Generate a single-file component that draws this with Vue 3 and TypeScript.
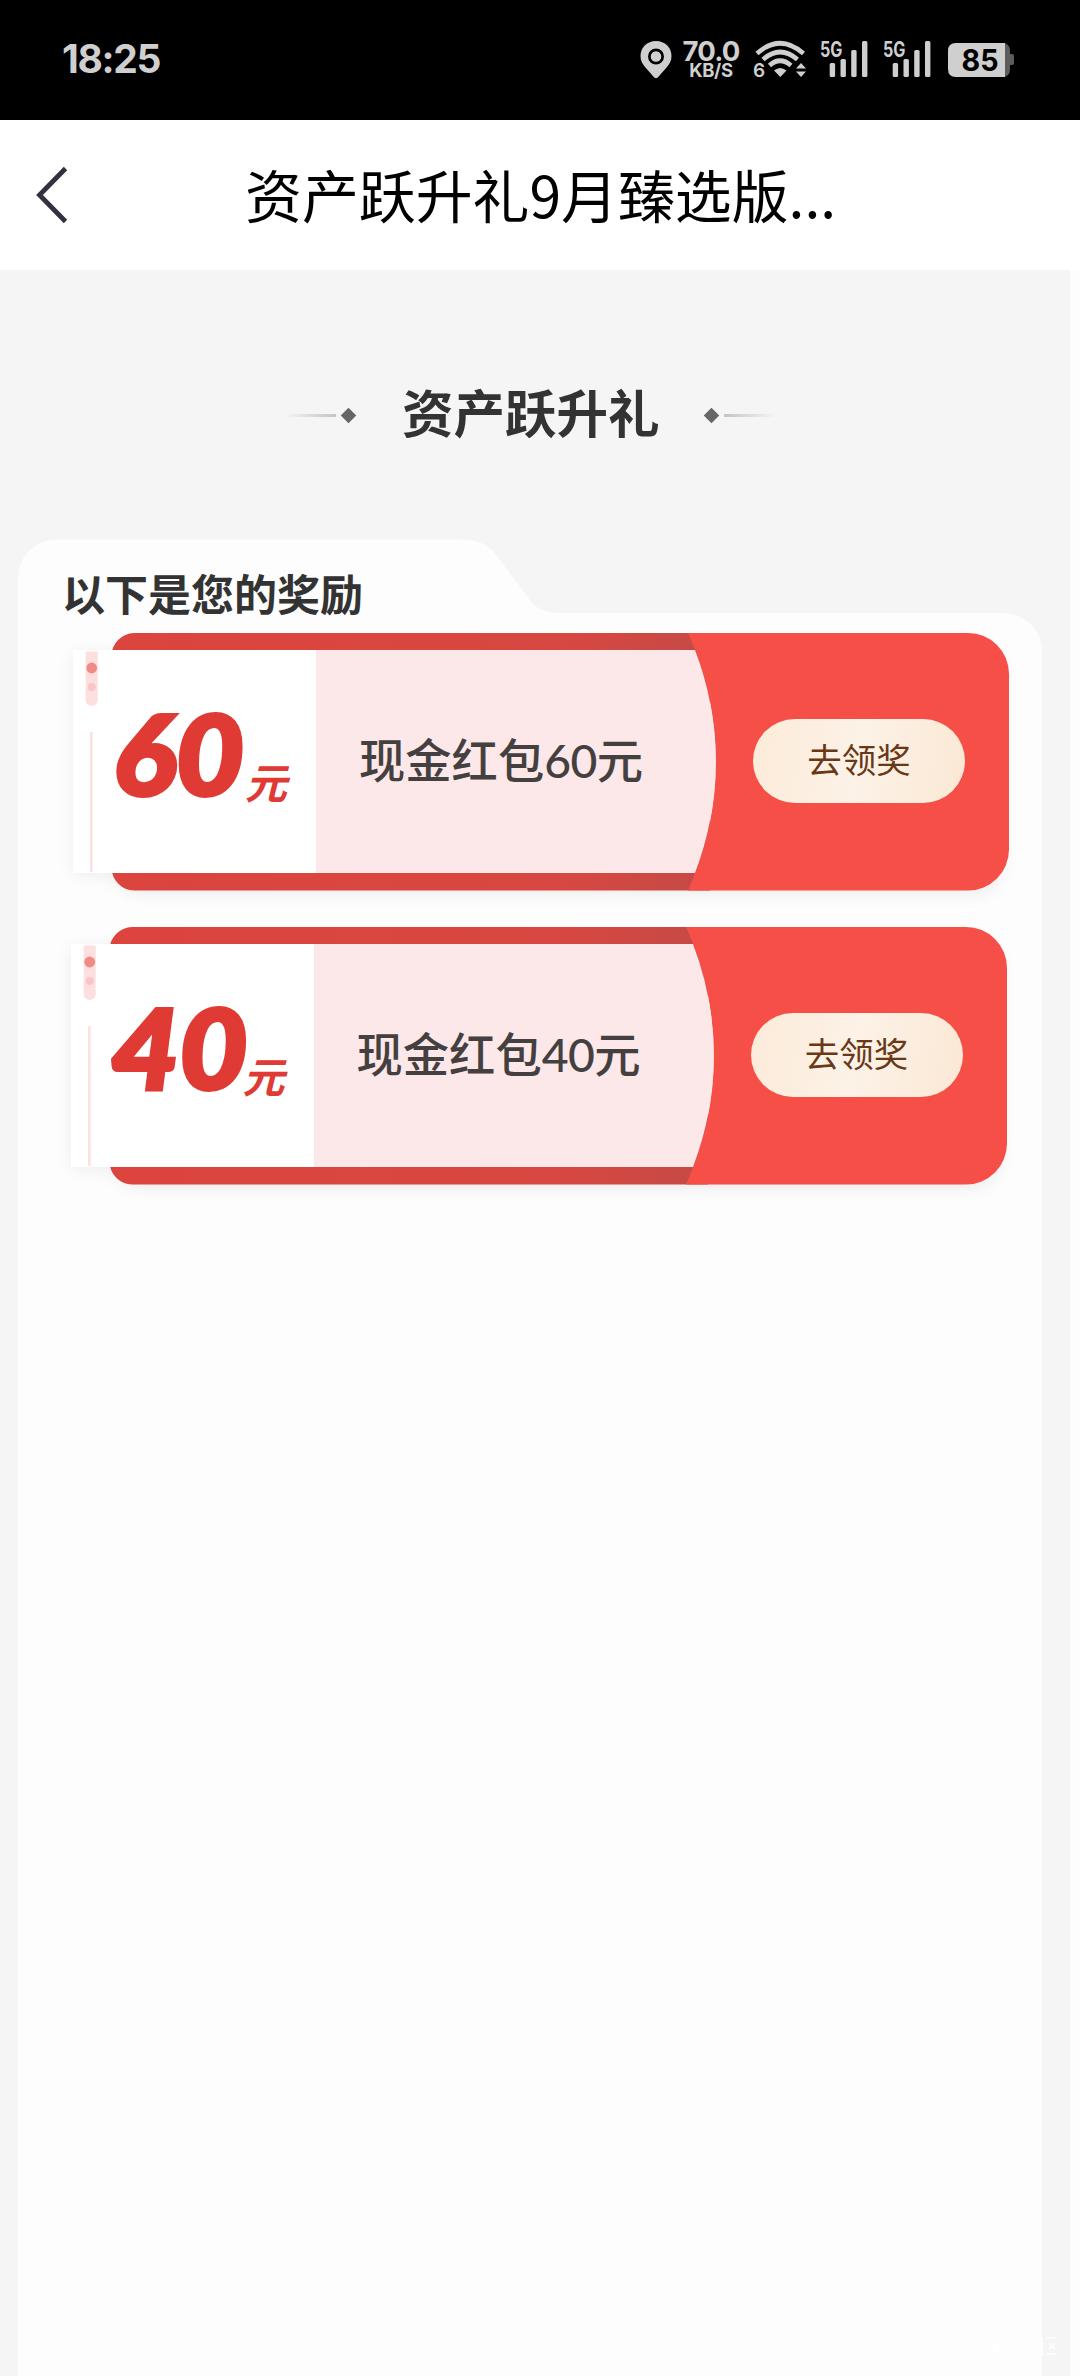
<script setup lang="ts">
interface Reward {
  amount: number
  label: string
}

const rewards: Reward[] = [
  { amount: 60, label: '现金红包' },
  { amount: 40, label: '现金红包' },
]

const bars = [
  { x: 9.7, y: 22 },
  { x: 20.5, y: 18 },
  { x: 31.2, y: 9 },
  { x: 42, y: 0 },
]
</script>

<template>
  <div class="phone">
    <div class="status">
      <span class="clock">18:25</span>
      <div class="indicators">
        <svg class="pin" width="32" height="38" viewBox="0 0 32 38">
          <path fill="#cfcfcf" fill-rule="evenodd" d="M16 0C7 0 .5 6.600.5 15c0 5 2 8 5 11.500L14 36.200q2 2 4 0L26.500 26.500C29.500 23 31.500 20 31.500 15 31.500 6.600 25 0 16 0ZM16 7.500a8 8 0 1 1 0 16a8 8 0 1 1 0-16Z" />
          <circle cx="16" cy="15.500" r="5.300" fill="#cfcfcf" />
        </svg>
        <div class="speed">
          <span class="rate">70.0</span>
          <span class="unit">KB/S</span>
        </div>
        <svg class="wifi" width="54" height="38" viewBox="0 0 54 38">
          <g fill="none" stroke="#cfcfcf" stroke-width="4.600">
            <path d="M4 12.500Q27-8 50.500 12.500" />
            <path d="M10 18.500Q27 3.500 44.500 18.500" />
            <path d="M16.500 24.500Q27 15 38 24.500" />
          </g>
          <path fill="#cfcfcf" d="M21 29.500q6-5 12.500 0L27.300 36ZM43 27.500 48 22l5 5.500ZM43 30.500h10l-5 5.500Z" />
          <text x="0" y="36" class="gen">6</text>
        </svg>
        <svg v-for="n in 2" :key="n" class="signal" width="49" height="38" viewBox="0 0 49 38">
          <text x="0" y="15.500" class="net" textLength="22.500" lengthAdjust="spacingAndGlyphs">5G</text>
          <rect v-for="b in bars" :key="b.x" :x="b.x" :y="b.y" width="5.400" :height="36 - b.y" rx="1.500" fill="#cfcfcf" />
        </svg>
        <svg class="battery" width="66" height="34" viewBox="0 0 66 34">
          <path fill="#5c5c5c" d="M50 0h4q8 0 8 8v3h2q2 0 2 2v7q0 2-2 2h-2v4q0 8-8 8h-4Z" />
          <path fill="#cfcfcf" d="M8 0h49v34H8q-8 0-8-8V8q0-8 8-8Z" />
          <text x="13.500" y="28.300" class="level" textLength="37" lengthAdjust="spacingAndGlyphs">85</text>
        </svg>
      </div>
    </div>

    <header class="nav">
      <svg class="back" width="32" height="60" viewBox="0 0 32 60">
        <path d="M29.500 3.500 3.500 30l26 26.500" fill="none" stroke="#34313f" stroke-width="4.800" />
      </svg>
      <h1>资产跃升礼9月臻选版...</h1>
    </header>

    <main class="page">
      <div class="section">
        <i class="line"></i><i class="diamond"></i>
        <h2>资产跃升礼</h2>
        <i class="diamond"></i><i class="line right"></i>
      </div>

      <section class="panel">
        <div class="top">
          <svg class="tab" width="1024" height="112" viewBox="0 0 1024 112">
            <path fill="#fdfdfd" d="M0 112V38.500A38 38 0 0 1 38 .5H442C460 .5 470 5 479 17L512 61Q521 74 543 74H986A38 38 0 0 1 1024 112Z" />
          </svg>
          <h3>以下是您的奖励</h3>
        </div>
        <ul class="list">
          <li v-for="r in rewards" :key="r.amount" class="coupon">
            <svg class="bg" width="976" height="298" viewBox="0 0 976 298">
              <defs>
                <linearGradient id="band" x1="0" x2="1" y1="0" y2="0">
                  <stop offset="0" stop-color="#dc443e" />
                  <stop offset=".75" stop-color="#d84741" />
                  <stop offset="1" stop-color="#c54a46" />
                </linearGradient>
                <filter id="soft" x="-10%" y="-20%" width="120%" height="150%">
                  <feGaussianBlur stdDeviation="9" />
                </filter>
              </defs>
              <g opacity=".075" filter="url(#soft)">
                <rect x="62" y="24" width="890" height="249" rx="30" />
                <rect x="24" y="34" width="200" height="220" />
              </g>
              <path fill="url(#band)" d="M84 13H660V270.500H84A23 23 0 0 1 61.500 248V36A23 23 0 0 1 84 13Z" />
              <path fill="#f64f48" d="M638 13H918A41 41 0 0 1 959 54V229.500A41 41 0 0 1 918 270.500H638A311 311 0 0 0 638 13Z" />
              <path fill="#fff" d="M23 30H266V253H23Z" />
              <path fill="#fce8e9" d="M266 30H645A311 311 0 0 1 645 253H266Z" />
              <path fill="#fddfdf" d="M35.700 31.500h12V80a6 6 0 0 1-12 0Z" />
              <circle cx="41.700" cy="48" r="5.400" fill="#f08a84" />
              <circle cx="41.700" cy="67" r="4" fill="#f9c5c5" />
              <rect x="40" y="112" width="2.600" height="140" fill="#fae2e1" />
            </svg>
            <div class="amount"><b>{{ r.amount }}</b><em>元</em></div>
            <div class="label">{{ r.label }}<span>{{ r.amount }}</span>元</div>
            <button type="button">去领奖</button>
          </li>
        </ul>
      </section>
      <svg class="mark" width="64" height="28" viewBox="0 0 64 28">
        <circle cx="4" cy="14" r="4" fill="#fff" />
        <path d="M50 4v18M54 4h10M54 20h11M57 9l6 6m0-6-6 6" stroke="#fff" stroke-width="2" opacity=".7" fill="none" />
      </svg>
    </main>
  </div>
</template>

<style>
body {
  background: #fdfdfd;
}
</style>

<style scoped>
.phone {
  width: 1080px;
  height: 2376px;
  overflow: hidden;
  background: #fdfdfd;
  font-family: "Noto Sans CJK SC", sans-serif;
}
h1, h2, h3, ul {
  margin: 0;
  padding: 0;
}
.status {
  box-sizing: border-box;
  height: 120px;
  padding: 0 66px 0 62px;
  background: #000;
  color: #cfcfcf;
  display: flex;
  justify-content: space-between;
  font-family: Inter, sans-serif;
}
.clock {
  font-size: 39px;
  font-weight: 700;
  line-height: 118px;
  letter-spacing: -1.3px;
}
.indicators {
  display: flex;
  align-items: flex-start;
  padding-top: 41px;
}
.indicators svg {
  overflow: visible;
}
.speed {
  width: 60px;
  margin: 0 12px 0 9px;
  display: flex;
  flex-direction: column;
  align-items: center;
}
.rate {
  font-size: 27.500px;
  font-weight: 700;
  line-height: 20px;
  letter-spacing: -0.8px;
}
.unit {
  font-size: 18.500px;
  font-weight: 700;
  line-height: 18px;
  letter-spacing: -0.3px;
}
.wifi {
  margin-right: 13px;
}
.gen {
  font: 600 19px Inter, sans-serif;
  fill: #cfcfcf;
}
.net {
  font: 700 21px Inter, sans-serif;
  fill: #cfcfcf;
}
.signal {
  margin-right: 14px;
}
.battery {
  margin: 2px 0 0 2px;
}
.level {
  font: 700 30px Inter, sans-serif;
  fill: #000;
}
.nav {
  height: 150px;
  background: #fff;
  display: flex;
  align-items: center;
}
.back {
  margin-left: 36px;
}
.nav h1 {
  margin: 0 0 4px 177px;
  font-size: 56.9px;
  font-weight: 400;
  line-height: 84px;
  color: #000;
  white-space: nowrap;
}
.page {
  position: relative;
  box-sizing: border-box;
  width: 1070px;
  height: 2106px;
  padding-top: 105px;
  background: #f5f5f5;
}
.section {
  height: 80px;
  margin-left: 284px;
  display: flex;
  align-items: center;
}
.section h2 {
  width: 258px;
  margin: 0 39px 9px 41px;
  font-size: 51.5px;
  line-height: 80px;
  font-weight: 700;
  color: #333;
  white-space: nowrap;
}
.line {
  width: 52px;
  height: 3px;
  background: linear-gradient(90deg, #f5f5f5, #c4c4c4);
}
.line.right {
  background: linear-gradient(270deg, #f5f5f5, #c4c4c4);
}
.diamond {
  width: 11px;
  height: 11px;
  margin: 0 7px;
  background: #666;
  transform: rotate(45deg);
}
.panel {
  width: 1024px;
  margin: 84px 0 0 18px;
}
.top {
  position: relative;
  height: 81px;
}
.tab {
  position: absolute;
  left: 0;
  top: 0;
}
.top h3 {
  position: relative;
  padding: 21px 0 0 44px;
  font-size: 43px;
  line-height: 64px;
  font-weight: 700;
  color: #333;
}
.list {
  box-sizing: border-box;
  height: 1760px;
  margin-top: 31px;
  background: #fdfdfd;
  list-style: none;
}
.coupon {
  position: relative;
  top: -31px;
  box-sizing: border-box;
  width: 976px;
  height: 294px;
  margin-left: 32px;
  padding-top: 13px;
  display: flex;
}
.coupon + .coupon {
  margin-left: 29.500px;
}
.bg {
  position: absolute;
  left: 0;
  top: 0;
}
.amount {
  position: relative;
  box-sizing: border-box;
  width: 266px;
  height: 257px;
  padding-left: 63px;
  display: flex;
  align-items: baseline;
  color: #e03a35;
  white-space: nowrap;
}
.amount b {
  width: 132px;
  font: italic 900 110px/239px Lato, sans-serif;
  -webkit-text-stroke: 4px #e03a35;
  letter-spacing: 0;
  transform: scaleX(1.07);
  transform-origin: 0 50%;
}
.amount em {
  position: relative;
  top: 4px;
  font-size: 42px;
  font-weight: 700;
  line-height: 60px;
}
.label {
  position: relative;
  width: 390px;
  padding-left: 43px;
  font-size: 46.300px;
  line-height: 249px;
  font-weight: 500;
  color: #454040;
  white-space: nowrap;
}
.label span {
  font-family: Lato, sans-serif;
  font-weight: 500;
  letter-spacing: -0.6px;
}
button {
  position: relative;
  width: 212px;
  height: 84px;
  margin: 86px 0 0 4px;
  padding: 0 0 6px;
  border: 0;
  border-radius: 42px;
  background: linear-gradient(100deg, #fcebd9, #fcf2e7 50%, #fbe8d4);
  color: #6a3817;
  font: 400 34.500px/78px "Noto Sans CJK SC", sans-serif;
}
.mark {
  position: absolute;
  left: 992px;
  top: 2064px;
}
</style>
